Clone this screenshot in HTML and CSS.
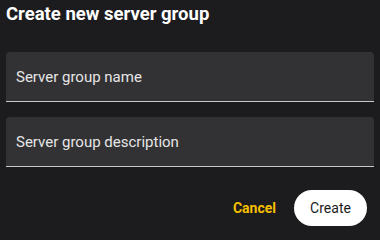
FILE: index.html
```html
<!DOCTYPE html>
<html>
<head>
<meta charset="utf-8">
<link rel="stylesheet" href="styles.css">
</head>
<body>
<div class="dialog">
  <h2 class="title">Create new server group</h2>
  <div class="fields">
    <label class="field"><input class="input" type="text" placeholder="Server group name"></label>
    <label class="field"><input class="input" type="text" placeholder="Server group description"></label>
  </div>
  <div class="actions">
    <button class="btn btn-text">Cancel</button>
    <button class="btn btn-filled">Create</button>
  </div>
</div>
</body>
</html>
```
FILE: styles.css
```css
html, body {
  margin: 0;
  padding: 0;
  background: #1c1c1e;
  width: 380px;
  height: 233px;
  overflow: hidden;
}
.dialog {
  font-family: Roboto, "Liberation Sans", sans-serif;
  padding: 0 6px;
  display: flex;
  flex-direction: column;
}
.title {
  margin: 0;
  padding-top: 3px;
  height: 52px;
  box-sizing: border-box;
  font-size: 18.5px;
  font-weight: 700;
  color: #ffffff;
  line-height: 22px;
}
.fields {
  display: flex;
  flex-direction: column;
  gap: 15px;
}
.field {
  display: block;
  background: #323234;
  border-radius: 4px 4px 0 0;
  border-bottom: 1px solid #c8c8c8;
  height: 50px;
  box-sizing: border-box;
}
.input {
  display: block;
  width: 100%;
  height: 100%;
  box-sizing: border-box;
  border: none;
  outline: none;
  background: transparent;
  padding: 0 10px;
  font-family: Roboto, "Liberation Sans", sans-serif;
  font-size: 15px;
  color: #eeeeee;
}
.input::placeholder {
  color: #e6e6e6;
  opacity: 1;
}
.actions {
  display: flex;
  justify-content: flex-end;
  align-items: center;
  gap: 18px;
  margin-top: 23px;
  padding-right: 7px;
}
.btn {
  font-family: Roboto, "Liberation Sans", sans-serif;
  font-size: 14px;
  border: none;
  cursor: pointer;
}
.btn-text {
  background: transparent;
  color: #f4bf00;
  font-weight: 700;
  padding: 0;
}
.btn-filled {
  background: #ffffff;
  color: #1c1c1e;
  font-weight: 400;
  height: 36px;
  width: 73px;
  border-radius: 18px;
  padding: 0;
}
```
